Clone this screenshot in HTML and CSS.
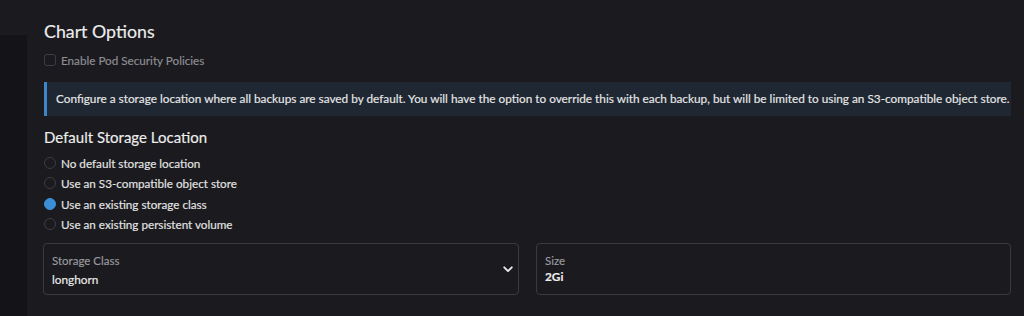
FILE: index.html
```html
<!DOCTYPE html>
<html>
<head>
<meta charset="utf-8">
<link rel="stylesheet" href="styles.css">
</head>
<body>
<div class="page">
  <div class="side"></div>
  <main class="content">
    <h2 class="title">Chart Options</h2>
    <label class="check">
      <span class="box"></span>
      <span class="check-label">Enable Pod Security Policies</span>
    </label>
    <div class="banner">Configure a storage location where all backups are saved by default. You will have the option to override this with each backup, but will be limited to using an S3-compatible object store.</div>
    <h3 class="subtitle">Default Storage Location</h3>
    <div class="radios">
      <div class="radio"><span class="dot"></span><span>No default storage location</span></div>
      <div class="radio"><span class="dot"></span><span>Use an S3-compatible object store</span></div>
      <div class="radio"><span class="dot checked"></span><span>Use an existing storage class</span></div>
      <div class="radio"><span class="dot"></span><span>Use an existing persistent volume</span></div>
    </div>
    <div class="fields">
      <div class="field select">
        <div class="field-text">
          <div class="field-label">Storage Class</div>
          <div class="field-value">longhorn</div>
        </div>
        <svg class="chev" width="10" height="7" viewBox="0 0 10 7"><path d="M1.2 1.3 L5 5.1 L8.8 1.3" fill="none" stroke="#e8e8e8" stroke-width="1.9" stroke-linecap="round" stroke-linejoin="round"/></svg>
      </div>
      <div class="field input">
        <div class="field-label">Size</div>
        <div class="field-value strong">2Gi</div>
      </div>
    </div>
  </main>
</div>
</body>
</html>
```

FILE: styles.css
```css
* { box-sizing: border-box; }
html, body { margin: 0; padding: 0; }
body {
  background: #1b1b1f;
  font-family: Lato, "Noto Sans", sans-serif;
  color: #e6e6e6;
  width: 1024px;
  height: 316px;
  overflow: hidden;
  -webkit-text-stroke: 0.15px currentColor;
}
.page {
  display: flex;
  height: 316px;
}
.side {
  width: 27px;
  flex: none;
  margin-top: 35px;
  background: #141418;
}
.content {
  flex: 1;
  padding: 19px 14px 0 17px;
}
.title {
  margin: 0;
  font-size: 17.8px;
  font-weight: 400;
  line-height: 24px;
  color: #ededed;
}
.check {
  display: flex;
  align-items: center;
  gap: 5px;
  margin-top: 9px;
  height: 16px;
}
.box {
  width: 12px;
  height: 12px;
  border: 1px solid #3c3c42;
  border-radius: 3px;
  background: #1b1b1f;
  flex: none;
}
.check-label {
  font-size: 11.7px;
  color: #8e8e93;
}
.banner {
  margin-top: 14px;
  background: #1f2732;
  border-left: 3px solid #3b87c9;
  padding: 0 0 0 9px;
  height: 34px;
  line-height: 34px;
  font-size: 11.8px;
  color: #e8e8e8;
  white-space: nowrap;
}
.subtitle {
  margin: 11px 0 0 0;
  font-size: 15px;
  font-weight: 400;
  line-height: 20px;
  color: #ededed;
}
.radios {
  margin-top: 6px;
  display: flex;
  flex-direction: column;
}
.radio {
  display: flex;
  align-items: center;
  gap: 5px;
  height: 20.3px;
  font-size: 11.7px;
  color: #e4e4e4;
}
.dot {
  width: 12px;
  height: 12px;
  border: 1px solid #3c3c42;
  border-radius: 50%;
  flex: none;
}
.dot.checked {
  background: #3b8fd6;
  border-color: #3b8fd6;
}
.fields {
  margin-top: 9px;
  display: grid;
  grid-template-columns: 476px 475px;
  gap: 17px;
  margin-left: -1px;
}
.field {
  height: 52px;
  border: 1px solid #3a3a40;
  border-radius: 4px;
  background: #1b1b1f;
}
.select {
  display: flex;
  align-items: center;
  justify-content: space-between;
  padding: 0 5px 0 8px;
}
.field-text {
  display: flex;
  flex-direction: column;
}
.field-label {
  font-size: 11.5px;
  color: #9a9a9f;
  line-height: 14px;
}
.select .field-value {
  font-size: 11.8px;
  color: #ededed;
  line-height: 14px;
  margin-top: 5px;
}
.select .field-text { margin-top: 2px; }
.input {
  padding: 10px 8px 0 8px;
}
.input .field-value {
  font-size: 11.8px;
  line-height: 14px;
  margin-top: 2px;
}
.strong { font-weight: 700; color: #ededed; }
```
